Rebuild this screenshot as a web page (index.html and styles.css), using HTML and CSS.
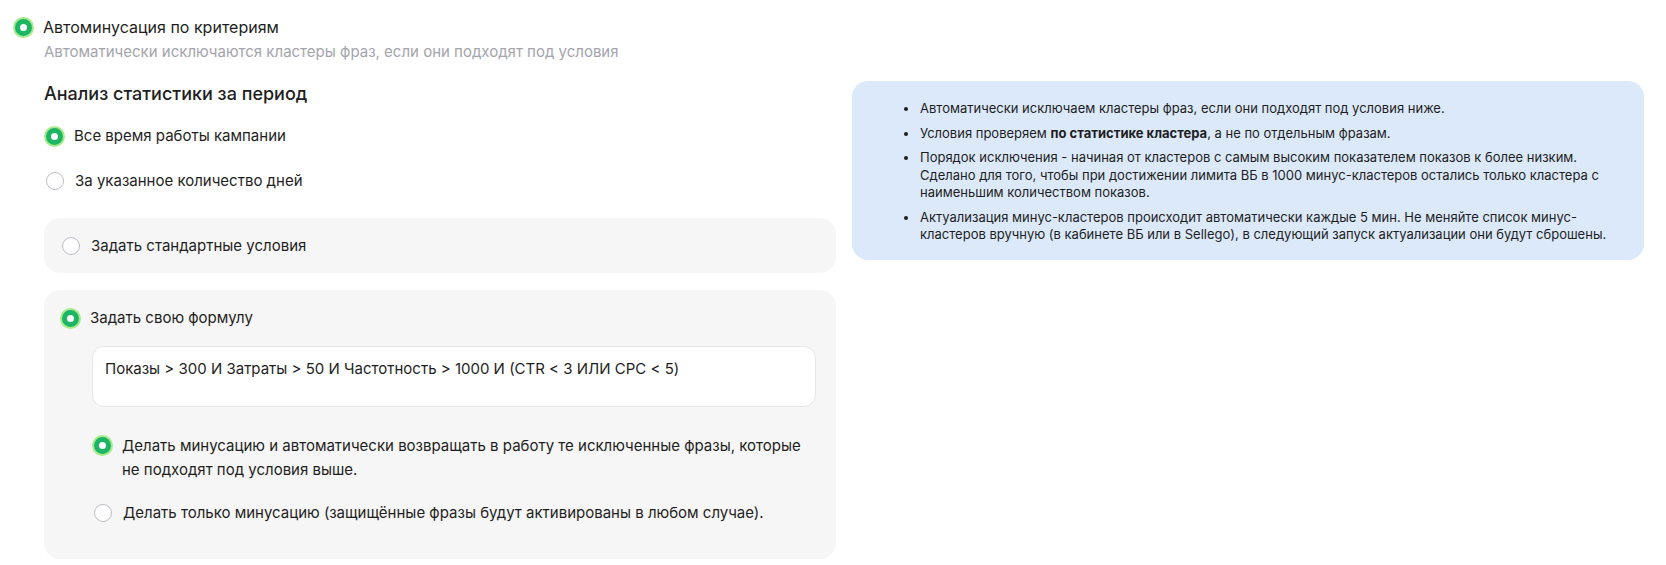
FILE: index.html
```html
<!DOCTYPE html>
<html lang="ru">
<head>
    <meta charset="UTF-8">
    <title>Автоминусация</title>
    <link rel="stylesheet" href="styles.css">
</head>
<body>
    <div class="page">
        <div class="left">
            <label class="radio-row top-row">
                <span class="radio checked"></span>
                <span class="radio-text">Автоминусация по критериям</span>
            </label>
            <p class="hint">Автоматически исключаются кластеры фраз, если они подходят под условия</p>

            <div class="section">
                <h2 class="section-title">Анализ статистики за период</h2>
                <div class="period-list">
                    <label class="radio-row">
                        <span class="radio checked"></span>
                        <span class="radio-text">Все время работы кампании</span>
                    </label>
                    <label class="radio-row">
                        <span class="radio"></span>
                        <span class="radio-text">За указанное количество дней</span>
                    </label>
                </div>

                <div class="card card-small">
                    <label class="radio-row">
                        <span class="radio"></span>
                        <span class="radio-text">Задать стандартные условия</span>
                    </label>
                </div>

                <div class="card card-formula">
                    <label class="radio-row">
                        <span class="radio checked"></span>
                        <span class="radio-text">Задать свою формулу</span>
                    </label>
                    <div class="formula">Показы &gt; 300 И Затраты &gt; 50 И Частотность &gt; 1000 И (CTR &lt; 3 ИЛИ CPC &lt; 5)</div>
                    <div class="mode-list">
                        <label class="radio-row multi">
                            <span class="radio checked"></span>
                            <span class="radio-text">Делать минусацию и автоматически возвращать в работу те исключенные фразы, которые не подходят под условия выше.</span>
                        </label>
                        <label class="radio-row">
                            <span class="radio"></span>
                            <span class="radio-text">Делать только минусацию (защищённые фразы будут активированы в любом случае).</span>
                        </label>
                    </div>
                </div>
            </div>
        </div>

        <div class="info">
            <ul class="info-list">
                <li>Автоматически исключаем кластеры фраз, если они подходят под условия ниже.</li>
                <li>Условия проверяем <b>по статистике кластера</b>, а не по отдельным фразам.</li>
                <li>Порядок исключения - начиная от кластеров с самым высоким показателем показов к более низким. Сделано для того, чтобы при достижении лимита ВБ в 1000 минус-кластеров остались только кластера с наименьшим количеством показов.</li>
                <li>Актуализация минус-кластеров происходит автоматически каждые 5 мин. Не меняйте список минус-кластеров вручную (в кабинете ВБ или в Sellego), в следующий запуск актуализации они будут сброшены.</li>
            </ul>
        </div>
    </div>
</body>
</html>
```

FILE: styles.css
```css
* {
    margin: 0;
    padding: 0;
    box-sizing: border-box;
}
body {
    font-family: Inter, "Noto Sans", sans-serif;
    color: #1e1e22;
    background: #ffffff;
}
.page {
    display: flex;
    align-items: flex-start;
    gap: 16px;
    padding: 17px 22px 0 14px;
}
.left {
    width: 822px;
    flex-shrink: 0;
}
.radio-row {
    display: flex;
    align-items: center;
    gap: 11px;
    font-size: 15px;
    line-height: 20px;
}
.top-row {
    font-size: 16px;
}
.radio-row.multi {
    align-items: flex-start;
}
.radio-row.multi .radio {
    margin-top: 1px;
}
.radio-row.multi .radio-text {
    line-height: 24px;
    margin-top: -2px;
}
.radio {
    flex-shrink: 0;
    width: 18px;
    height: 18px;
    border-radius: 50%;
    border: 1.5px solid #bdbdc6;
    background: #ffffff;
}
.radio.checked {
    border: 5px solid #1bb563;
    box-shadow: 0 0 0 2px #a8ea8e;
    width: 17px;
    height: 17px;
}
.top-row .radio {
    margin-left: 1px;
}
.hint {
    margin: 5px 0 0 30px;
    font-size: 15px;
    line-height: 20px;
    color: #a4a4ad;
}
.section {
    padding-left: 30px;
}
.section-title {
    margin-top: 20px;
    font-size: 18px;
    font-weight: 500;
    line-height: 24px;
}
.period-list {
    display: flex;
    flex-direction: column;
    gap: 25px;
    margin: 20px 0 0 2px;
}
.card {
    background: #f6f6f6;
    border-radius: 16px;
    padding: 0 18px;
}
.card-small {
    margin-top: 27px;
    height: 55px;
    display: flex;
    align-items: center;
}
.card-formula {
    margin-top: 17px;
    padding-top: 18px;
    padding-bottom: 36px;
}
.formula {
    margin: 18px 2px 0 30px;
    height: 61px;
    background: #ffffff;
    border: 1px solid #e7e7ea;
    border-radius: 12px;
    padding: 12px 12px;
    font-size: 15px;
    line-height: 20px;
}
.mode-list {
    display: flex;
    flex-direction: column;
    gap: 21px;
    margin: 29px 8px 0 32px;
}
.info {
    flex: 1;
    margin-top: 64px;
    background: #dbe9fb;
    border-radius: 16px;
    padding: 19px 28px 16px 52px;
}
.info-list {
    list-style: none;
    display: flex;
    flex-direction: column;
    gap: 7px;
}
.info-list li {
    position: relative;
    padding-left: 16px;
    font-size: 13px;
    line-height: 17.5px;
}
.info-list li::before {
    content: "";
    position: absolute;
    left: 0;
    top: 7px;
    width: 4px;
    height: 4px;
    border-radius: 50%;
    background: #1e1e22;
}
.info-list b {
    font-weight: 700;
}
```
